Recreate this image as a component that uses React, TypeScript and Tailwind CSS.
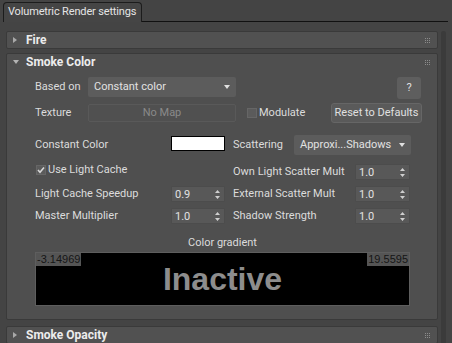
import React from "react";

const ui = "font-['Roboto','Liberation_Sans',sans-serif]";

function Grip() {
  const pts = [0, 2, 4];
  return (
    <svg width="5" height="5" className="shrink-0">
      {pts.flatMap((y) =>
        pts.map((x) => <rect key={`${x}-${y}`} x={x} y={y} width="1" height="1" fill="#8c8c8c" />)
      )}
    </svg>
  );
}

function Arrow({ open }: { open?: boolean }) {
  return open ? (
    <svg width="6" height="4" className="shrink-0">
      <path d="M0 0 L6 0 L3 4 Z" fill="#b4b4b4" />
    </svg>
  ) : (
    <svg width="4" height="6" className="shrink-0">
      <path d="M0 0 L4 3 L0 6 Z" fill="#a8a8a8" />
    </svg>
  );
}

function RolloutHeader({ title, open }: { title: string; open?: boolean }) {
  return (
    <div className="flex h-[16px] items-center pl-[6px] pr-[7px]">
      <div className="flex w-[13px] justify-start">
        <Arrow open={open} />
      </div>
      <span className="text-[12px] font-bold leading-none text-[#ececec]">{title}</span>
      <div className="flex-1" />
      <Grip />
    </div>
  );
}

function DropArrow() {
  return (
    <svg width="6" height="4" className="shrink-0">
      <path d="M0 0 L6 0 L3 4 Z" fill="#e0e0e0" />
    </svg>
  );
}

function Dropdown({ value, width }: { value: string; width: string }) {
  return (
    <div className={`flex h-[20px] ${width} items-center justify-between rounded-[2px] bg-[#5c5c5c] pl-[6px] pr-[6px] text-[#e2e2e2]`}>
      <span>{value}</span>
      <DropArrow />
    </div>
  );
}

function Spinner({ value, width }: { value: string; width: string }) {
  return (
    <div className={`flex h-[16px] ${width} items-center justify-between rounded-[1px] border border-[#4c4c4c] bg-[#585858] pl-[3px] pr-[4px] text-[#e2e2e2]`}>
      <span className="leading-none">{value}</span>
      <svg width="5" height="9" className="shrink-0">
        <path d="M0 3 L5 3 L2.5 0 Z M0 6 L5 6 L2.5 9 Z" fill="#cfcfcf" />
      </svg>
    </div>
  );
}

function Check({ checked }: { checked?: boolean }) {
  return (
    <div className="flex h-[10px] w-[10px] shrink-0 items-center justify-center border border-[#666] bg-[#5b5b5b]">
      {checked && (
        <svg width="8" height="8" viewBox="0 0 8 8">
          <path d="M1 4 L3 6.2 L7 1.5" fill="none" stroke="#d8d8d8" strokeWidth="1.6" />
        </svg>
      )}
    </div>
  );
}

export default function App() {
  return (
    <div className={`${ui} relative h-[343px] w-[452px] overflow-hidden bg-[#444444] text-[11px] text-[#dcdcdc]`}>
      {/* tab strip */}
      <div className="flex h-[22px] items-end pl-[3px]">
        <div className="flex h-[20px] w-[139px] items-center whitespace-nowrap rounded-t-[4px] border border-b-0 border-[#1c1c1c] bg-[#454545] pl-[4px] text-[11px] tracking-[-0.15px] text-[#e4e4e4]">
          Volumetric Render settings
        </div>
        <div className="h-[1px] w-[306px] bg-[#111]" />
      </div>

      <div className="flex pt-[9px]">
        <div className="ml-[6px] flex w-[432px] flex-col gap-[4px]">
          <div className="rounded-[2px] border border-[#3a3a3a] bg-[#515151]">
            <RolloutHeader title="Fire" />
          </div>

          <div className="flex flex-col rounded-[2px] border border-[#3a3a3a] bg-[#4f4f4f] pb-[13px] pl-[28px] pr-[16px]">
            <div className="-ml-[28px] -mr-[16px]">
              <RolloutHeader title="Smoke Color" open />
            </div>

            {/* based on */}
            <div className="mt-[7px] flex h-[22px] items-start">
              <span className="flex h-[20px] w-[53px] items-center">Based on</span>
              <Dropdown value="Constant color" width="w-[148px]" />
              <div className="ml-auto flex h-[22px] w-[24px] items-center justify-center rounded-[3px] bg-[#5e5e5e] text-[#e0e0e0]">
                ?
              </div>
            </div>

            {/* texture */}
            <div className="mt-[4px] flex h-[20px] items-center">
              <span className="w-[53px]">Texture</span>
              <div className="flex h-[18px] w-[148px] items-center justify-center rounded-[2px] border border-[#595959] bg-[#505050] text-[#8a8a8a]">
                No Map
              </div>
              <div className="ml-[11px]">
                <Check />
              </div>
              <span className="ml-[2px]">Modulate</span>
              <div className="-mr-[1px] ml-auto flex h-[20px] w-[91px] items-center justify-center rounded-[3px] border border-[#666] bg-[#5a5a5a] text-[#e0e0e0]">
                Reset to Defaults
              </div>
            </div>

            {/* constant color / scattering */}
            <div className="mt-[12px] flex h-[20px] items-center">
              <span className="w-[136px]">Constant Color</span>
              <div className="mt-[1px] h-[15px] w-[54px] self-start border border-black bg-white" />
              <span className="ml-[8px] w-[61px]">Scattering</span>
              <Dropdown value="Approxi...Shadows" width="w-[117px]" />
            </div>

            {/* params */}
            <div className="mt-[9px] flex flex-col gap-[6px]">
              <div className="flex h-[16px] items-start">
                <div className="flex h-[11px] w-[190px] items-center pl-[1px]">
                  <Check checked />
                  <span className="ml-[2px] leading-none">Use Light Cache</span>
                </div>
                <div className="ml-[8px] flex h-[16px] items-center">
                  <span className="w-[122px]">Own Light Scatter Mult</span>
                  <Spinner value="1.0" width="w-[55px]" />
                </div>
              </div>
              <div className="flex h-[16px] items-center">
                <div className="flex w-[190px] items-center">
                  <span className="w-[136px]">Light Cache Speedup</span>
                  <Spinner value="0.9" width="w-[54px]" />
                </div>
                <div className="ml-[8px] flex items-center">
                  <span className="w-[122px]">External Scatter Mult</span>
                  <Spinner value="1.0" width="w-[55px]" />
                </div>
              </div>
              <div className="flex h-[16px] items-center">
                <div className="flex w-[190px] items-center">
                  <span className="w-[136px]">Master Multiplier</span>
                  <Spinner value="1.0" width="w-[54px]" />
                </div>
                <div className="ml-[8px] flex items-center">
                  <span className="w-[122px]">Shadow Strength</span>
                  <Spinner value="1.0" width="w-[55px]" />
                </div>
              </div>
            </div>

            {/* gradient */}
            <div className="mt-[13px] w-[375px] text-center leading-[12px]">Color gradient</div>
            <div className="relative mt-[3px] flex h-[54px] w-[375px] items-center justify-center border border-[#5e5e5e] bg-black">
              <span className="absolute left-0 top-0 bg-[#555] px-[1px] font-['Liberation_Sans',sans-serif] text-[11px] leading-[13px] text-[#151515]">
                -3.14969
              </span>
              <span className="absolute right-0 top-0 bg-[#555] px-[1px] font-['Liberation_Sans',sans-serif] text-[11px] leading-[13px] text-[#151515]">
                19.5595
              </span>
              <span className="font-['Liberation_Sans',sans-serif] text-[32px] font-bold leading-none text-[#8d8d8d]">
                Inactive
              </span>
            </div>
          </div>

          <div className="mt-[2px] rounded-[2px] border border-[#3a3a3a] bg-[#515151]">
            <RolloutHeader title="Smoke Opacity" />
          </div>
        </div>

        <div className="ml-[3px] h-[320px] w-[5px] rounded-[2px] bg-[#3b3b3b]" />
      </div>
    </div>
  );
}
